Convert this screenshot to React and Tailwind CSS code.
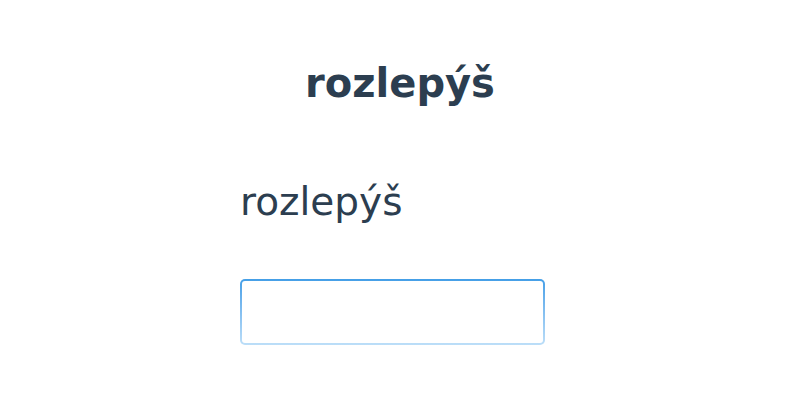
export default function App() {
  return (
    <div className="w-[800px] h-[400px] bg-white flex flex-col text-[#2c3e50]" style={{ fontFamily: '"DejaVu Sans", sans-serif' }}>
      <h1 className="mt-[59px] text-center text-[40px] font-bold leading-[48px]">rozlepýš</h1>
      <div className="ml-[240px] w-[305px] mt-[71px] flex flex-col">
        <label className="text-[39px] leading-[48px]">rozlepýš</label>
        <div className="mt-[53px] h-[66px] rounded-[5px] p-[2px] bg-gradient-to-b from-[#449fe7] to-[#bcdef8]">
          <input className="block w-full h-full rounded-[3px] bg-white outline-none" />
        </div>
      </div>
    </div>
  );
}
